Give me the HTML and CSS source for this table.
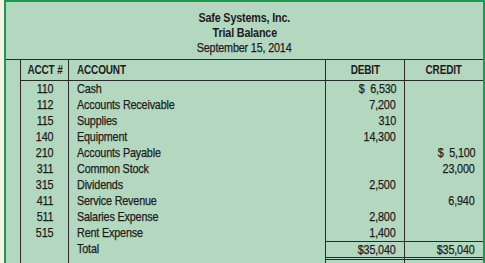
FILE: index.html
```html
<!DOCTYPE html>
<html>
<head>
<meta charset="utf-8">
<link rel="stylesheet" href="styles.css">
</head>
<body>
<div class="panel">
  <div class="heading">
    <div class="b"><span class="t">Safe Systems, Inc.</span></div>
    <div class="b"><span class="t">Trial Balance</span></div>
    <div><span class="t">September 15, 2014</span></div>
  </div>
  <div class="grid">
    <div class="c blank"></div>
    <div class="c num hd"><span class="t">ACCT #</span></div>
    <div class="c acc hd"><span class="t">ACCOUNT</span></div>
    <div class="c ctr hd"><span class="t">DEBIT</span></div>
    <div class="c ctr hd"><span class="t">CREDIT</span></div>

    <div class="c blank"></div><div class="c num"><span class="t">110</span></div><div class="c acc"><span class="t">Cash</span></div><div class="c amt"><span class="t">$&nbsp;&nbsp;6,530</span></div><div class="c amt"></div>
    <div class="c blank"></div><div class="c num"><span class="t">112</span></div><div class="c acc"><span class="t">Accounts Receivable</span></div><div class="c amt"><span class="t">7,200</span></div><div class="c amt"></div>
    <div class="c blank"></div><div class="c num"><span class="t">115</span></div><div class="c acc"><span class="t">Supplies</span></div><div class="c amt"><span class="t">310</span></div><div class="c amt"></div>
    <div class="c blank"></div><div class="c num"><span class="t">140</span></div><div class="c acc"><span class="t">Equipment</span></div><div class="c amt"><span class="t">14,300</span></div><div class="c amt"></div>
    <div class="c blank"></div><div class="c num"><span class="t">210</span></div><div class="c acc"><span class="t">Accounts Payable</span></div><div class="c amt"></div><div class="c amt"><span class="t">$&nbsp;&nbsp;5,100</span></div>
    <div class="c blank"></div><div class="c num"><span class="t">311</span></div><div class="c acc"><span class="t">Common Stock</span></div><div class="c amt"></div><div class="c amt"><span class="t">23,000</span></div>
    <div class="c blank"></div><div class="c num"><span class="t">315</span></div><div class="c acc"><span class="t">Dividends</span></div><div class="c amt"><span class="t">2,500</span></div><div class="c amt"></div>
    <div class="c blank"></div><div class="c num"><span class="t">411</span></div><div class="c acc"><span class="t">Service Revenue</span></div><div class="c amt"></div><div class="c amt"><span class="t">6,940</span></div>
    <div class="c blank"></div><div class="c num"><span class="t">511</span></div><div class="c acc"><span class="t">Salaries Expense</span></div><div class="c amt"><span class="t">2,800</span></div><div class="c amt"></div>
    <div class="c blank"></div><div class="c num"><span class="t">515</span></div><div class="c acc"><span class="t">Rent Expense</span></div><div class="c amt"><span class="t">1,400</span></div><div class="c amt"></div>
    <div class="c blank"></div><div class="c num"></div><div class="c acc"><span class="t">Total</span></div><div class="c amt tot"><span class="t">$35,040</span></div><div class="c amt tot"><span class="t">$35,040</span></div>
    <div class="c blank"></div><div class="c num"></div><div class="c acc"></div><div class="c amt dbl"></div><div class="c amt dbl"></div>
  </div>
</div>
</body>
</html>
```

FILE: styles.css
```css
html, body {
  margin: 0;
  padding: 0;
  height: 100%;
  background: #f6f1e2;
  overflow: hidden;
}
.panel {
  margin-left: 4px;
  width: 481px;
  height: 100%;
  box-sizing: border-box;
  background: #b4d7c0;
  border-top: 2px solid #1b9a52;
  border-left: 2px solid #1b9a52;
  border-right: 2px solid #1b9a52;
  font-family: "Liberation Sans", Arial, sans-serif;
  color: #1e1b1c;
  display: flex;
  flex-direction: column;
  letter-spacing: -0.2px;
}
.t {
  display: inline-block;
  transform: scaleX(0.83);
  transform-origin: center;
  -webkit-text-stroke: 0.25px currentColor;
}
.heading {
  height: 57px;
  padding-top: 8px;
  box-sizing: border-box;
  text-align: center;
  font-size: 13px;
  line-height: 15px;
}
.b { font-weight: bold; }
.b .t { transform: scaleX(0.83); -webkit-text-stroke: 0; }
.grid {
  flex: 1;
  display: grid;
  grid-template-columns: 14px 48px 257px 79px 79px;
  grid-template-rows: 21px repeat(11, 16px) 1fr;
  border-top: 1px solid #2a2a2a;
  font-size: 13px;
  line-height: 16px;
}
.c {
  box-sizing: border-box;
  white-space: nowrap;
}
.num, .acc, .amt, .ctr { border-left: 1px solid #2a2a2a; }
.num { text-align: center; padding-left: 1px; }
.acc { padding-left: 8px; }
.acc .t { transform-origin: left center; }
.amt { text-align: right; padding-right: 8px; }
.amt .t { transform-origin: right center; }
.ctr { text-align: center; }
.hd {
  font-weight: bold;
  font-size: 12.5px;
  border-bottom: 1px solid #2a2a2a;
  line-height: 20px;
}
.hd .t { transform: scaleX(0.8); -webkit-text-stroke: 0; }
.acc.hd .t { transform-origin: left center; }
.tot { border-top: 1px solid #2a2a2a; line-height: 15px; }
.dbl { border-top: 3px double #2a2a2a; }
```
